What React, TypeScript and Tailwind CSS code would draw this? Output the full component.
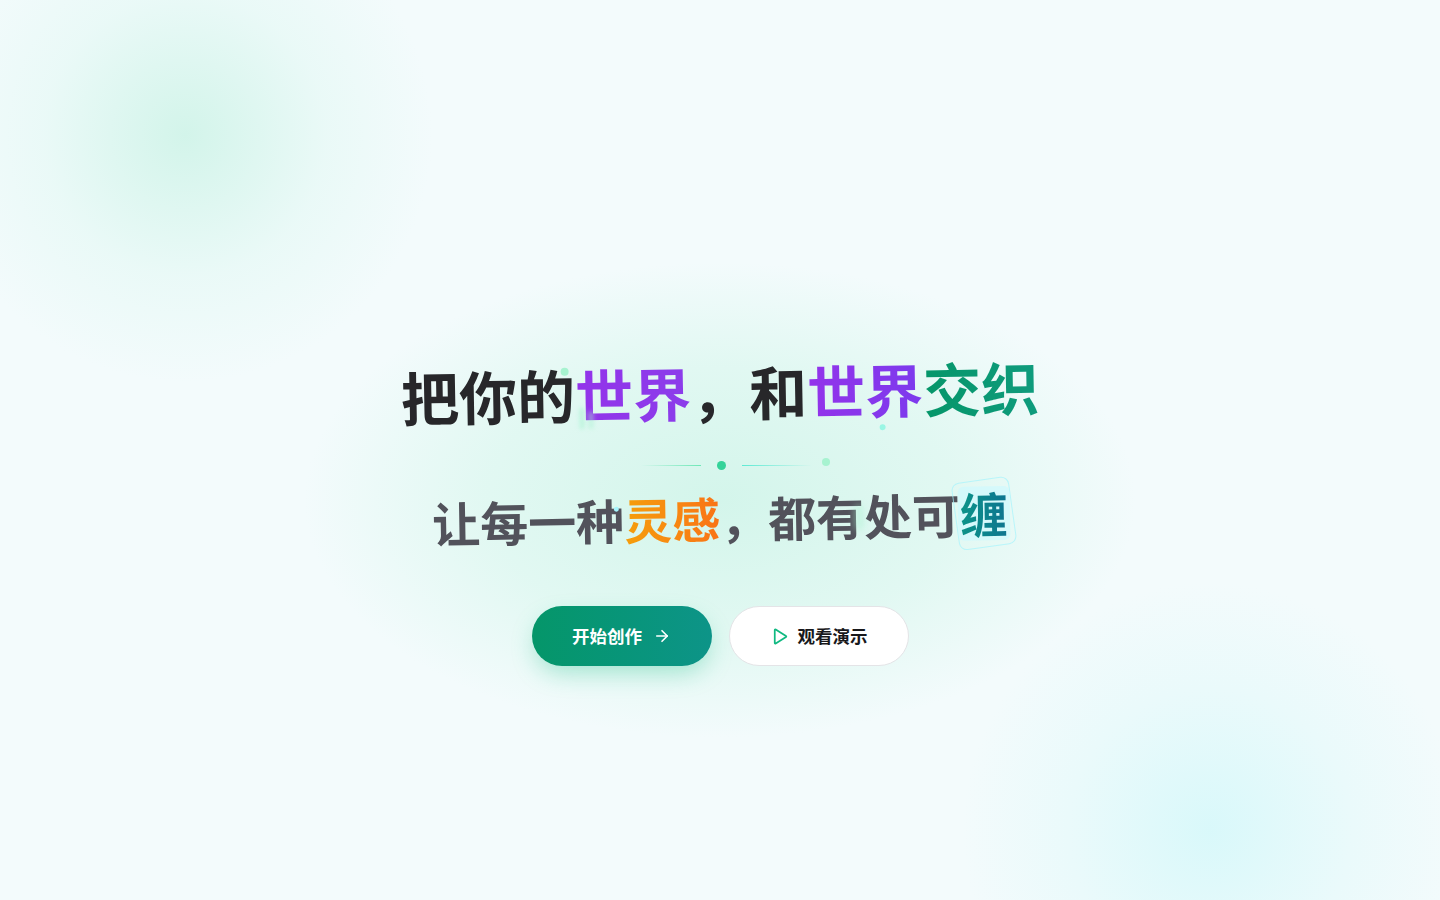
import React from "react";

const CJK = { fontFamily: '"Noto Sans CJK SC", "Noto Sans", sans-serif' };

function Play() {
  return (
    <svg width="19" height="19" viewBox="0 0 24 24" fill="none" stroke="#10b981" strokeWidth="2.2" strokeLinecap="round" strokeLinejoin="round">
      <path d="M6 3.8v16.4a.8.8 0 0 0 1.2.7l13-8.2a.8.8 0 0 0 0-1.4l-13-8.2A.8.8 0 0 0 6 3.8z" />
    </svg>
  );
}

function Arrow() {
  return (
    <svg width="18" height="18" viewBox="0 0 24 24" fill="none" stroke="white" strokeWidth="2.2" strokeLinecap="round" strokeLinejoin="round">
      <path d="M5 12h14" />
      <path d="m12 5 7 7-7 7" />
    </svg>
  );
}

export default function App() {
  return (
    <div className="relative min-h-screen w-full overflow-hidden bg-[#f3fbfc]" style={CJK}>
      {/* background glows */}
      <div className="pointer-events-none absolute left-[-65px] top-[-115px] h-[500px] w-[500px] rounded-full bg-[radial-gradient(circle,rgba(200,242,228,0.75)_0%,rgba(220,247,240,0.4)_40%,rgba(243,251,252,0)_70%)]" />
      <div className="pointer-events-none absolute left-[960px] top-[580px] h-[500px] w-[500px] rounded-full bg-[radial-gradient(circle,rgba(214,248,250,0.9)_0%,rgba(225,249,250,0.5)_40%,rgba(243,251,252,0)_70%)]" />
      <div className="pointer-events-none absolute left-[300px] top-[260px] h-[480px] w-[840px] rounded-full bg-[radial-gradient(ellipse_at_center,rgba(210,245,234,0.95)_0%,rgba(218,247,238,0.7)_40%,rgba(243,251,252,0)_70%)]" />

      <main className="relative flex flex-col items-center pt-[357px]">
        {/* headline */}
        <h1 className="relative -rotate-1 text-[58px] font-bold leading-[1.2] tracking-normal text-[#27272a]">
          <span>把你的</span>
          <span className="bg-linear-to-r from-[#9333ea] to-[#8b3dea] bg-clip-text text-transparent">世界</span>
          <span>，和</span>
          <span className="bg-linear-to-r from-[#9333ea] to-[#7c3aed] bg-clip-text text-transparent">世界</span>
          <span className="bg-linear-to-r from-[#059669] to-[#0f9b7d] bg-clip-text text-transparent">交织</span>
          <span className="absolute left-[160px] top-[8px] h-[8px] w-[8px] rounded-full bg-[#a7f3d0]" />
          <span className="absolute left-[478px] top-[70px] h-[6px] w-[6px] rounded-full bg-[#99f6e4]" />
          <span className="absolute left-[178px] top-[48px] h-[22px] w-[5px] rounded-full bg-[#a7f3d0]/60 blur-[2px]" />
          <span className="absolute left-[187px] top-[52px] h-[18px] w-[5px] rounded-full bg-[#a7f3d0]/50 blur-[2px]" />
        </h1>

        {/* divider */}
        <div className="mt-[34px] flex items-center pl-[30px]">
          <div className="h-px w-[60px] bg-linear-to-r from-transparent to-[#6ee7b7]" />
          <div className="ml-[16px] h-[9px] w-[9px] rounded-full bg-[#34d399]" />
          <div className="ml-[16px] h-px w-[70px] bg-linear-to-r from-[#5eead4] to-transparent" />
          <div className="-mt-[6px] ml-[10px] h-[8px] w-[8px] rounded-full bg-[#a7f3d0]" />
        </div>

        {/* subline */}
        <p className="relative mt-[19px] -rotate-1 text-[48px] font-bold leading-[1.2] text-[#52525b]">
          <span>让每一种</span>
          <span className="bg-linear-to-r from-[#f59e0b] to-[#f97316] bg-clip-text text-transparent">灵感</span>
          <span>，都有处可</span>
          <span className="relative inline-block">
            <span className="absolute -inset-x-[5px] -inset-y-[5px] rotate-[-7deg] rounded-lg border border-[#a5f3fc]/70" />
            <span className="absolute inset-x-[-2px] inset-y-[2px] rounded-md bg-[#cffafe]/70" />
            <span className="relative bg-linear-to-r from-[#0d9488] to-[#0e7490] bg-clip-text text-transparent">缠</span>
          </span>
          <span className="absolute left-[182px] top-[16px] h-[5px] w-[5px] rounded-full bg-[#a5f3fc]" />
          <span className="absolute left-[422px] top-[18px] h-[26px] w-[10px] rounded-full bg-[#a7f3d0]/40 blur-[3px]" />
        </p>

        {/* buttons */}
        <div className="mt-[60px] flex items-center gap-[17px]">
          <button className="flex h-[60px] w-[180px] items-center justify-center gap-[11px] rounded-full bg-linear-to-r from-[#059669] to-[#0d9488] text-[17.5px] font-bold text-white shadow-[0_10px_24px_-4px_rgba(16,185,129,0.35)]">
            <span>开始创作</span>
            <Arrow />
          </button>
          <button className="flex h-[60px] w-[180px] items-center justify-center gap-[9px] rounded-full border border-[#e4e4e7] bg-white text-[17.5px] font-bold text-[#18181b]">
            <Play />
            <span>观看演示</span>
          </button>
        </div>
      </main>
    </div>
  );
}
